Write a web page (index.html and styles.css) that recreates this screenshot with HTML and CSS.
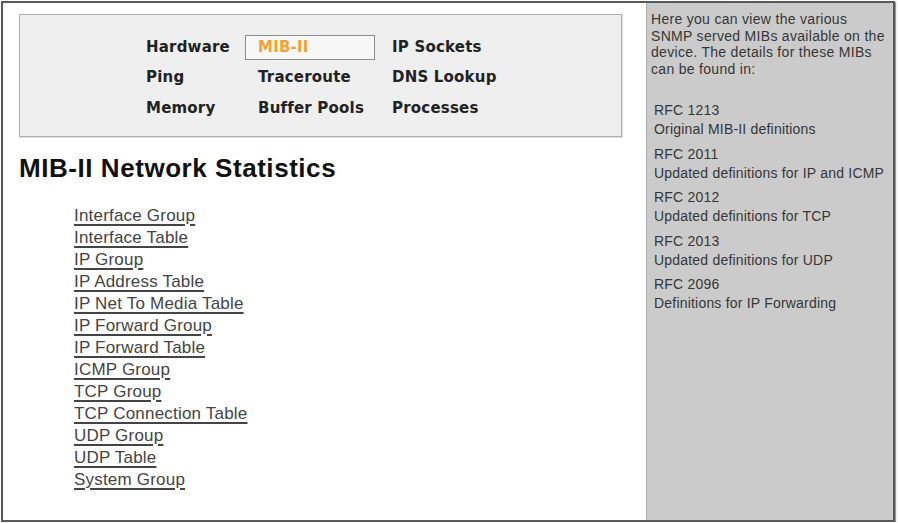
FILE: index.html
```html
<!DOCTYPE html>
<html lang="en">
<head>
    <meta charset="UTF-8">
    <title>MIB-II Network Statistics</title>
    <link rel="stylesheet" href="styles.css">
</head>
<body>

    <div class="window">
        <div class="main">

            <!-- top menu of device pages -->
            <div class="menu-box">
                <div class="menu">
                    <a href="#" class="menu-item">Hardware</a>
                    <a href="#" class="menu-item active">MIB-II</a>
                    <a href="#" class="menu-item">IP Sockets</a>
                    <a href="#" class="menu-item">Ping</a>
                    <a href="#" class="menu-item">Traceroute</a>
                    <a href="#" class="menu-item">DNS Lookup</a>
                    <a href="#" class="menu-item">Memory</a>
                    <a href="#" class="menu-item">Buffer Pools</a>
                    <a href="#" class="menu-item">Processes</a>
                </div>
            </div>

            <h1 class="page-title">MIB-II Network Statistics</h1>

            <ul class="mib-list">
                <li><a href="#">Interface Group</a></li>
                <li><a href="#">Interface Table</a></li>
                <li><a href="#">IP Group</a></li>
                <li><a href="#">IP Address Table</a></li>
                <li><a href="#">IP Net To Media Table</a></li>
                <li><a href="#">IP Forward Group</a></li>
                <li><a href="#">IP Forward Table</a></li>
                <li><a href="#">ICMP Group</a></li>
                <li><a href="#">TCP Group</a></li>
                <li><a href="#">TCP Connection Table</a></li>
                <li><a href="#">UDP Group</a></li>
                <li><a href="#">UDP Table</a></li>
                <li><a href="#">System Group</a></li>
            </ul>
        </div>

        <!-- help text on the right -->
        <div class="sidebar">
            <p class="intro">Here you can view the various SNMP served MIBs available on the device. The details for these MIBs can be found in:</p>

            <div class="rfc">RFC 1213<br>Original MIB-II definitions</div>
            <div class="rfc">RFC 2011<br>Updated definitions for IP and ICMP</div>
            <div class="rfc">RFC 2012<br>Updated definitions for TCP</div>
            <div class="rfc">RFC 2013<br>Updated definitions for UDP</div>
            <div class="rfc">RFC 2096<br>Definitions for IP Forwarding</div>
        </div>
    </div>

</body>
</html>
```

FILE: styles.css
```css
body {
    margin: 0;
    padding: 0;
    background-color: white;
    font-family: "Liberation Sans", Arial, sans-serif;
}
.window {
    display: flex;
    width: 890px;
    height: 517px;
    margin: 1px 0 0 1px;
    border: 2px solid #5a5a5a;
    box-shadow: 1px 1px 1px #999;
}
.main {
    width: 643px;
    background-color: white;
}
.menu-box {
    width: 601px;
    height: 121px;
    margin: 11px 0 0 16px;
    background-color: #efefef;
    border: 1px solid #b0b0b0;
    box-shadow: 1px 1px 0 #ddd;
}
.menu {
    display: grid;
    grid-template-columns: 112px 134px auto;
    grid-auto-rows: 30.5px;
    padding: 17px 0 0 113px;
}
.menu-item {
    align-self: center;
    padding-left: 12px;
    font-family: "DejaVu Sans", Verdana, sans-serif;
    font-weight: bold;
    font-size: 15px;
    letter-spacing: 0.2px;
    line-height: 23px;
    color: #222;
    text-decoration: none;
    border: 1px solid transparent;
}
.menu-item.active {
    width: 116px;
    color: #f5a033;
    background-color: #f7f7f7;
    border-color: #8c8c8c;
}
.page-title {
    margin: 16px 0 0 16px;
    font-size: 26px;
    line-height: 30px;
    letter-spacing: 0.55px;
    color: #111;
}
.mib-list {
    list-style: none;
    margin: 22px 0 0 71px;
    padding: 0;
}
.mib-list li {
    font-size: 17px;
    line-height: 22px;
    letter-spacing: 0.2px;
}
.mib-list a {
    color: #444;
    text-decoration: underline;
    text-decoration-thickness: 2px;
    text-underline-offset: 3px;
}
.sidebar {
    flex: 1;
    background-color: #cbcbcb;
    border-left: 1px solid #aaa;
    padding: 8px 8px 0 4px;
    font-size: 14px;
    letter-spacing: 0.3px;
    color: #363636;
}
.intro {
    margin: 0 0 24px 0;
    line-height: 16.5px;
}
.rfc {
    line-height: 19px;
    margin-bottom: 5.5px;
    padding-left: 3px;
    letter-spacing: 0.2px;
}
```
